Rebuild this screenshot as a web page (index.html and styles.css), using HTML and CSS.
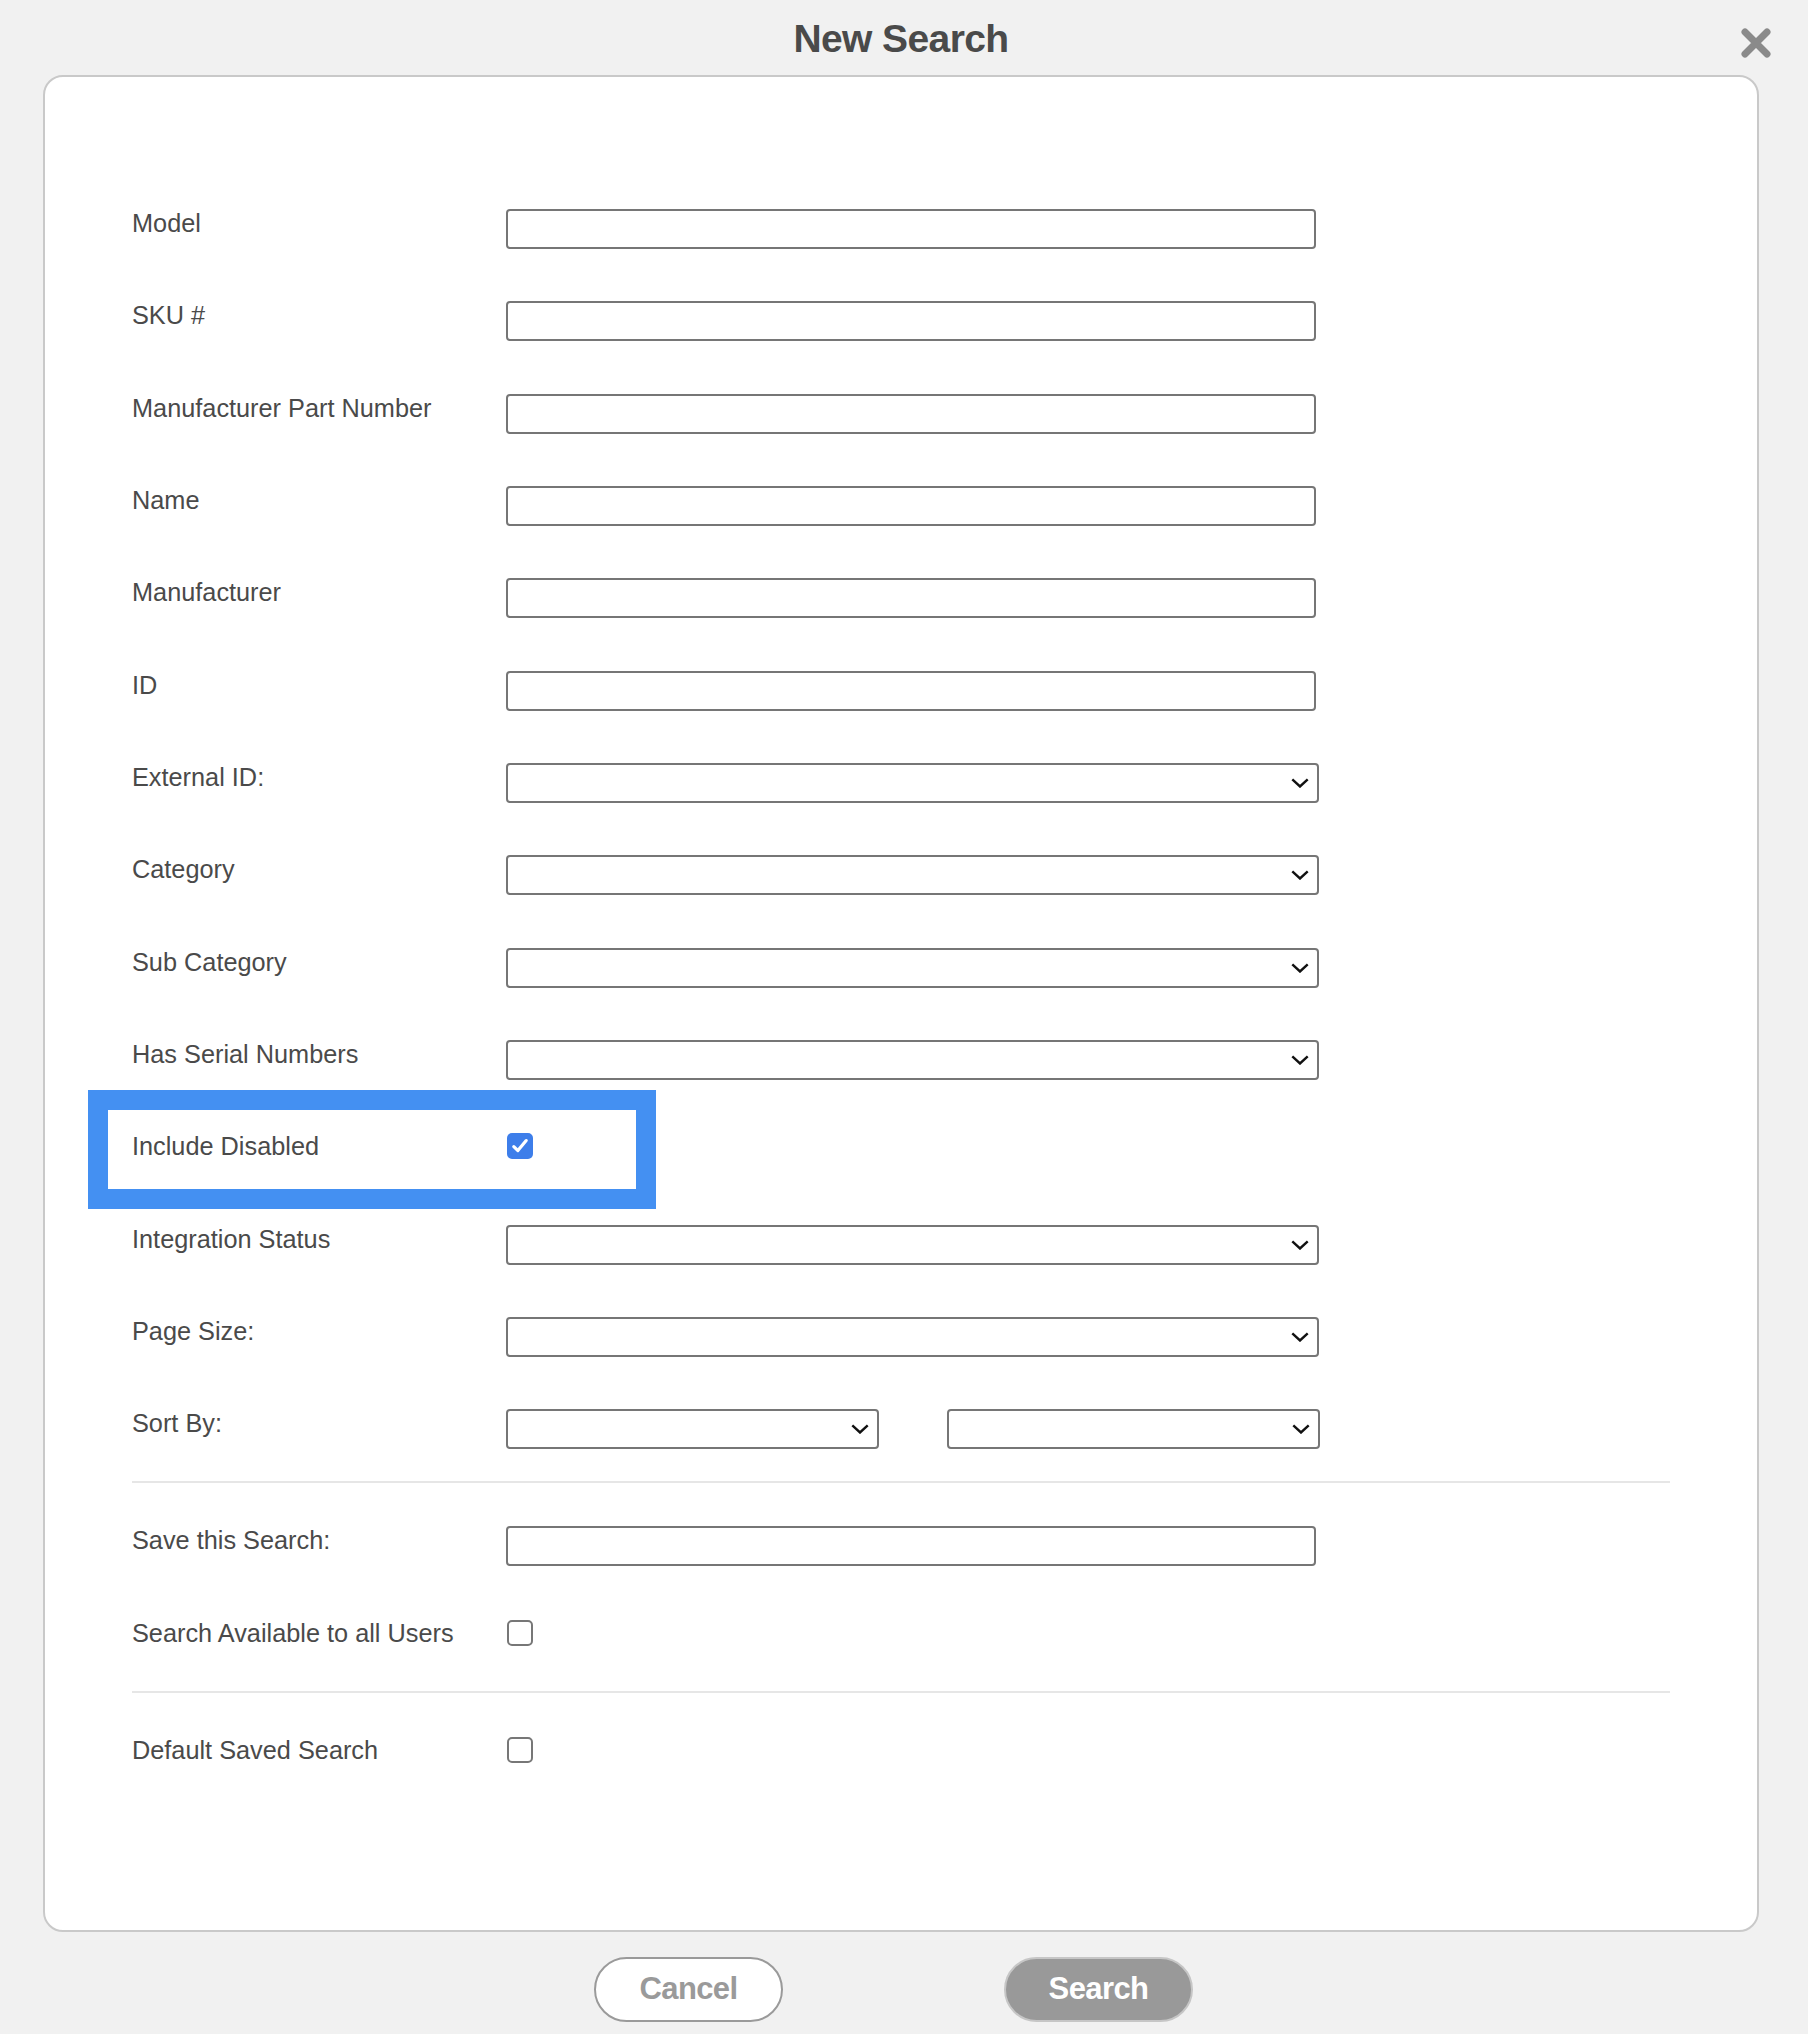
FILE: index.html
```html
<!DOCTYPE html>
<html lang="en">
<head>
<meta charset="utf-8">
<title>New Search</title>
<link rel="stylesheet" href="styles.css">
</head>
<body>
<div class="page">
  <header class="header">
    <h1 class="title">New Search</h1>
    <button class="close" type="button" aria-label="Close">
      <svg width="30" height="30" viewBox="0 0 30 30"><path d="M4 4 L26 26 M26 4 L4 26" stroke="#8a8a8a" stroke-width="7" stroke-linecap="round" fill="none"/></svg>
    </button>
  </header>

  <main class="card">
    <form class="form">
      <div class="row"><label class="label">Model</label><input class="field" type="text"></div>
      <div class="row"><label class="label">SKU #</label><input class="field" type="text"></div>
      <div class="row"><label class="label">Manufacturer Part Number</label><input class="field" type="text"></div>
      <div class="row"><label class="label">Name</label><input class="field" type="text"></div>
      <div class="row"><label class="label">Manufacturer</label><input class="field" type="text"></div>
      <div class="row"><label class="label">ID</label><input class="field" type="text"></div>
      <div class="row"><label class="label">External ID:</label>
        <div class="select-wrap"><select class="select"><option></option></select><svg class="chev" width="18" height="10" viewBox="0 0 18 10"><path d="M1.3 1.3 L9 8.5 L16.7 1.3" stroke="#111" stroke-width="2.4" fill="none"/></svg></div></div>
      <div class="row"><label class="label">Category</label>
        <div class="select-wrap"><select class="select"><option></option></select><svg class="chev" width="18" height="10" viewBox="0 0 18 10"><path d="M1.3 1.3 L9 8.5 L16.7 1.3" stroke="#111" stroke-width="2.4" fill="none"/></svg></div></div>
      <div class="row"><label class="label">Sub Category</label>
        <div class="select-wrap"><select class="select"><option></option></select><svg class="chev" width="18" height="10" viewBox="0 0 18 10"><path d="M1.3 1.3 L9 8.5 L16.7 1.3" stroke="#111" stroke-width="2.4" fill="none"/></svg></div></div>
      <div class="row"><label class="label">Has Serial Numbers</label>
        <div class="select-wrap"><select class="select"><option></option></select><svg class="chev" width="18" height="10" viewBox="0 0 18 10"><path d="M1.3 1.3 L9 8.5 L16.7 1.3" stroke="#111" stroke-width="2.4" fill="none"/></svg></div></div>
      <div class="row row-highlighted"><label class="label">Include Disabled</label>
        <span class="checkbox is-checked" role="checkbox" aria-checked="true"><svg width="26" height="26" viewBox="0 0 26 26"><path d="M6.8 13.6 L10.9 17.6 L19.2 7.6" stroke="#fff" stroke-width="3.2" stroke-linecap="round" stroke-linejoin="round" fill="none"/></svg></span>
        <span class="highlight" aria-hidden="true"></span>
      </div>
      <div class="row"><label class="label">Integration Status</label>
        <div class="select-wrap"><select class="select"><option></option></select><svg class="chev" width="18" height="10" viewBox="0 0 18 10"><path d="M1.3 1.3 L9 8.5 L16.7 1.3" stroke="#111" stroke-width="2.4" fill="none"/></svg></div></div>
      <div class="row"><label class="label">Page Size:</label>
        <div class="select-wrap"><select class="select"><option></option></select><svg class="chev" width="18" height="10" viewBox="0 0 18 10"><path d="M1.3 1.3 L9 8.5 L16.7 1.3" stroke="#111" stroke-width="2.4" fill="none"/></svg></div></div>
      <div class="row row-end"><label class="label">Sort By:</label>
        <div class="sort-pair">
          <div class="select-wrap select-half"><select class="select"><option></option></select><svg class="chev" width="18" height="10" viewBox="0 0 18 10"><path d="M1.3 1.3 L9 8.5 L16.7 1.3" stroke="#111" stroke-width="2.4" fill="none"/></svg></div>
          <div class="select-wrap select-half"><select class="select"><option></option></select><svg class="chev" width="18" height="10" viewBox="0 0 18 10"><path d="M1.3 1.3 L9 8.5 L16.7 1.3" stroke="#111" stroke-width="2.4" fill="none"/></svg></div>
        </div>
      </div>
      <hr class="divider">
      <div class="row"><label class="label">Save this Search:</label><input class="field" type="text"></div>
      <div class="row row-end"><label class="label">Search Available to all Users</label><span class="checkbox" role="checkbox" aria-checked="false"></span></div>
      <hr class="divider">
      <div class="row row-last"><label class="label">Default Saved Search</label><span class="checkbox" role="checkbox" aria-checked="false"></span></div>
    </form>
  </main>

  <footer class="actions">
    <button class="btn btn-cancel" type="button">Cancel</button>
    <button class="btn btn-search" type="button">Search</button>
  </footer>
</div>
</body>
</html>
```

FILE: styles.css
```css
html, body {
  margin: 0;
  padding: 0;
  background: #f1f1f1;
}

body {
  font-family: "Liberation Sans", Arial, Helvetica, sans-serif;
  color: #4a4a4a;
}

.page {
  width: 1808px;
  min-height: 2034px;
}

.header {
  display: grid;
  grid-template-columns: 1fr auto 1fr;
  height: 75px;
  margin: 0 49px 0 43px;
}

.title {
  grid-column: 2;
  margin: 0;
  padding-top: 2px;
  line-height: 73px;
  font-size: 39px;
  font-weight: 700;
  letter-spacing: -0.6px;
  color: #4a4a4a;
}

.close {
  grid-column: 3;
  justify-self: end;
  align-self: center;
  margin: 11px -12px 0 0;
  padding: 0;
  width: 30px;
  height: 30px;
  border: 0;
  background: none;
  display: flex;
}

.card {
  display: block;
  margin: 0 49px 0 43px;
  background: #fff;
  border: 2px solid #c9c9c9;
  border-radius: 20px;
  padding: 132px 87px 154px 87px;
}

.form {
  display: flex;
  flex-direction: column;
}

.row {
  display: flex;
  align-items: flex-start;
  height: 40px;
  margin-bottom: 52.33px;
}

.row-end {
  margin-bottom: 32px;
}

.row-last {
  margin-bottom: 0;
}

.row-highlighted {
  position: relative;
}

.label {
  flex: 0 0 374px;
  font-size: 25.3px;
  line-height: 28px;
  color: #4a4a4a;
}

.field {
  box-sizing: border-box;
  width: 810px;
  height: 40px;
  margin: 0;
  padding: 0 10px;
  border: 2px solid #767676;
  border-radius: 4px;
  background: #fff;
  font: 22px "Liberation Sans", Arial, sans-serif;
}

.select-wrap {
  display: grid;
  width: 813px;
  height: 40px;
}

.select-half {
  width: 373px;
}

.select-wrap > * {
  grid-area: 1 / 1;
}

.select {
  -webkit-appearance: none;
  appearance: none;
  box-sizing: border-box;
  width: 100%;
  height: 40px;
  margin: 0;
  padding: 0 10px;
  border: 2px solid #767676;
  border-radius: 4px;
  background: #fff;
  font: 22px "Liberation Sans", Arial, sans-serif;
}

.chev {
  justify-self: end;
  align-self: center;
  margin-right: 10px;
  pointer-events: none;
}

.sort-pair {
  display: flex;
  gap: 68px;
}

.checkbox {
  box-sizing: border-box;
  display: flex;
  width: 26px;
  height: 26px;
  margin: 1px 0 0 1px;
  border: 2px solid #777;
  border-radius: 5px;
  background: #fff;
}

.checkbox.is-checked {
  border: 0;
  background: #3d7eea;
}

.highlight {
  position: absolute;
  left: -44px;
  top: -42px;
  width: 568px;
  height: 119px;
  box-sizing: border-box;
  border: 20px solid #4490f2;
  pointer-events: none;
}

.divider {
  margin: 0 0 43px 0;
  height: 2px;
  border: 0;
  background: #e6e6e6;
}

.actions {
  display: flex;
  justify-content: center;
  gap: 221px;
  margin-top: 25px;
  padding-right: 21px;
}

.btn {
  box-sizing: border-box;
  width: 189px;
  height: 65px;
  border-radius: 33px;
  font: 700 31px "Liberation Sans", Arial, sans-serif;
  letter-spacing: -0.6px;
  padding: 0;
}

.btn-cancel {
  background: #fff;
  border: 2px solid #9a9a9a;
  color: #9a9a9a;
}

.btn-search {
  background: #999;
  border: 2px solid #c6c6c6;
  color: #fff;
}
```
